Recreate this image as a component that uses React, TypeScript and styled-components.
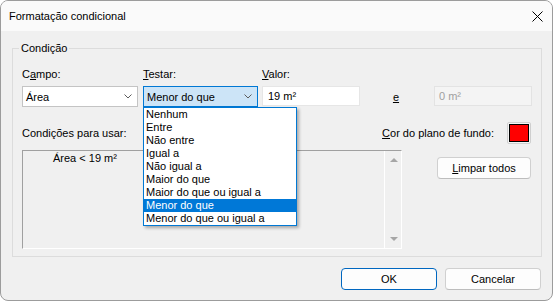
import styled, { createGlobalStyle } from 'styled-components'

const GlobalStyle = createGlobalStyle`
  html, body {
    margin: 0;
    padding: 0;
    background: #ffffff;
  }
  body {
    font-family: 'Liberation Sans', Arial, sans-serif;
    font-size: 11px;
    color: #000000;
  }
`

const Window = styled.div`
  width: 553px;
  height: 301px;
  box-sizing: border-box;
  border: 1px solid #9c9c9c;
  border-radius: 8px;
  background: #f0f0f0;
  overflow: hidden;
  display: flex;
  flex-direction: column;
`

const TitleBar = styled.div`
  height: 30px;
  flex: none;
  display: flex;
  align-items: center;
  justify-content: space-between;
  padding: 0 9px 0 8px;
  background: #fafafa;
`

const Title = styled.span`
  font-size: 11px;
  line-height: 16px;
`

const CloseIcon = styled.svg`
  display: block;
  width: 11px;
  height: 11px;
`

const Body = styled.div`
  flex: 1;
  display: flex;
  flex-direction: column;
  padding: 9px 10px 10px 11px;
`

const Group = styled.fieldset`
  margin: 0;
  padding: 0 9px 7px 9px;
  border: 1px solid #dcdcdc;
  min-width: 0;
`

const Legend = styled.legend`
  margin-left: -3px;
  padding: 0 2px;
  line-height: 16px;
`

const FieldGrid = styled.div`
  margin-top: 10px;
  display: grid;
  grid-template-columns: 121px 119px 98px 1fr 98px;
  grid-template-rows: 16px 21px;
  row-gap: 4px;
  align-items: start;
`

const FieldLabel = styled.span`
  line-height: 16px;
`

const ComboCell = styled.div`
  position: relative;
`

const Combo = styled.div<{ $width: number; $focused?: boolean }>`
  width: ${(p) => p.$width}px;
  height: 21px;
  box-sizing: border-box;
  display: flex;
  align-items: center;
  justify-content: space-between;
  padding: 0 5px 0 3px;
  background: ${(p) => (p.$focused ? '#cce4f7' : '#ffffff')};
  border: 1px solid ${(p) => (p.$focused ? '#0078d4' : '#c4c4c4')};
`

const Chevron = styled.svg`
  display: block;
  width: 8px;
  height: 5px;
`

const DropList = styled.ul`
  position: absolute;
  top: 100%;
  left: 0;
  z-index: 5;
  width: 154px;
  margin: 0;
  padding: 0;
  list-style: none;
  box-sizing: border-box;
  background: #ffffff;
  border: 1px solid #0078d4;
  box-shadow: 2px 2px 3px rgba(0, 0, 0, 0.3);
`

const DropItem = styled.li<{ $selected?: boolean }>`
  height: 13px;
  line-height: 13px;
  padding-left: 2px;
  white-space: nowrap;
  background: ${(p) => (p.$selected ? '#0078d7' : 'transparent')};
  color: ${(p) => (p.$selected ? '#ffffff' : '#000000')};
`

const TextBox = styled.div<{ $disabled?: boolean }>`
  width: 98px;
  height: 20px;
  box-sizing: border-box;
  display: flex;
  align-items: center;
  padding-left: ${(p) => (p.$disabled ? '4px' : '5px')};
  background: ${(p) => (p.$disabled ? '#f4f4f4' : '#ffffff')};
  border: 1px solid ${(p) => (p.$disabled ? '#e3e3e3' : '#e6e6e6')};
  color: ${(p) => (p.$disabled ? '#a0a0a0' : '#000000')};
`

const AndLabel = styled.span`
  height: 21px;
  display: flex;
  align-items: center;
  justify-content: center;
  padding-right: 2px;
`

const InfoRow = styled.div`
  margin-top: 15px;
  height: 22px;
  display: flex;
  align-items: center;
  justify-content: space-between;
`

const ColorPicker = styled.div`
  display: flex;
  align-items: center;
  gap: 13px;
  margin-right: 1px;
`

const Swatch = styled.div<{ $color: string }>`
  width: 24px;
  height: 22px;
  box-sizing: border-box;
  border: 1px solid #cfcfcf;
  border-radius: 2px;
  padding: 1px;
  background: #f5f5f5;

  &::after {
    content: '';
    display: block;
    height: 100%;
    box-sizing: border-box;
    border: 1px solid #000000;
    background: ${(p) => p.$color};
  }
`

const ListRow = styled.div`
  margin-top: 6px;
  display: flex;
  align-items: flex-start;
  justify-content: space-between;
`

const ConditionsBox = styled.div`
  width: 380px;
  height: 99px;
  box-sizing: border-box;
  display: flex;
  border-top: 1px solid #a0a0a0;
  border-left: 1px solid #a0a0a0;
  border-right: 1px solid #ffffff;
  border-bottom: 1px solid #ffffff;
`

const ConditionsText = styled.div`
  flex: 1;
  padding-left: 30px;
  line-height: 15px;
`

const ScrollBar = styled.div`
  width: 17px;
  box-sizing: border-box;
  border-left: 1px solid #ffffff;
  display: flex;
  flex-direction: column;
  justify-content: space-between;
  align-items: center;
  padding: 7px 0 7px 1px;
`

const ScrollArrow = styled.svg`
  display: block;
  width: 8px;
  height: 4px;
`

const Button = styled.button<{ $primary?: boolean; $width: number }>`
  width: ${(p) => p.$width}px;
  height: 22px;
  box-sizing: border-box;
  padding: 0;
  font: inherit;
  color: #000000;
  background: #fdfdfd;
  border: 1px solid ${(p) => (p.$primary ? '#0067c0' : '#d0d0d0')};
  border-bottom-color: ${(p) => (p.$primary ? '#0067c0' : '#bdbdbd')};
  border-radius: 4px;
`

const SideButton = styled(Button)`
  margin-top: 7px;
  margin-right: 1px;
`

const Footer = styled.div`
  margin-top: 11px;
  display: flex;
  justify-content: flex-end;
  gap: 8px;
  padding-right: 1px;
`

const options = [
  'Nenhum',
  'Entre',
  'Não entre',
  'Igual a',
  'Não igual a',
  'Maior do que',
  'Maior do que ou igual a',
  'Menor do que',
  'Menor do que ou igual a',
]

function ChevronDown() {
  return (
    <Chevron viewBox="0 0 8 5">
      <polyline points="0.5,0.5 4,4 7.5,0.5" fill="none" stroke="#5c5c5c" strokeWidth="1" />
    </Chevron>
  )
}

export default function App() {
  return (
    <>
      <GlobalStyle />
      <Window>
        <TitleBar>
          <Title>Formatação condicional</Title>
          <CloseIcon viewBox="0 0 11 11">
            <path d="M0.5 0.5 L10.5 10.5 M10.5 0.5 L0.5 10.5" stroke="#000" strokeWidth="1" />
          </CloseIcon>
        </TitleBar>

        <Body>
          <Group>
            <Legend>Condição</Legend>

            <FieldGrid>
              <FieldLabel>C<u>a</u>mpo:</FieldLabel>
              <FieldLabel><u>T</u>estar:</FieldLabel>
              <FieldLabel><u>V</u>alor:</FieldLabel>
              <span />
              <span />

              <Combo $width={116}>
                <span>Área</span>
                <ChevronDown />
              </Combo>
              <ComboCell>
                <Combo $width={115} $focused>
                  <span>Menor do que</span>
                  <ChevronDown />
                </Combo>
                <DropList>
                  {options.map((o) => (
                    <DropItem key={o} $selected={o === 'Menor do que'}>{o}</DropItem>
                  ))}
                </DropList>
              </ComboCell>
              <TextBox>19 m²</TextBox>
              <AndLabel><u>e</u></AndLabel>
              <TextBox $disabled>0 m²</TextBox>
            </FieldGrid>

            <InfoRow>
              <span>Condições para usar:</span>
              <ColorPicker>
                <span><u>C</u>or do plano de fundo:</span>
                <Swatch $color="#ff0000" />
              </ColorPicker>
            </InfoRow>

            <ListRow>
              <ConditionsBox>
                <ConditionsText>Área &lt; 19 m²</ConditionsText>
                <ScrollBar>
                  <ScrollArrow viewBox="0 0 8 4">
                    <polygon points="0,4 4,0 8,4" fill="#a6a6a6" />
                  </ScrollArrow>
                  <ScrollArrow viewBox="0 0 8 4">
                    <polygon points="0,0 8,0 4,4" fill="#a6a6a6" />
                  </ScrollArrow>
                </ScrollBar>
              </ConditionsBox>
              <SideButton $width={94}><u>L</u>impar todos</SideButton>
            </ListRow>
          </Group>

          <Footer>
            <Button $primary $width={96}>OK</Button>
            <Button $width={96}>Cancelar</Button>
          </Footer>
        </Body>
      </Window>
    </>
  )
}
